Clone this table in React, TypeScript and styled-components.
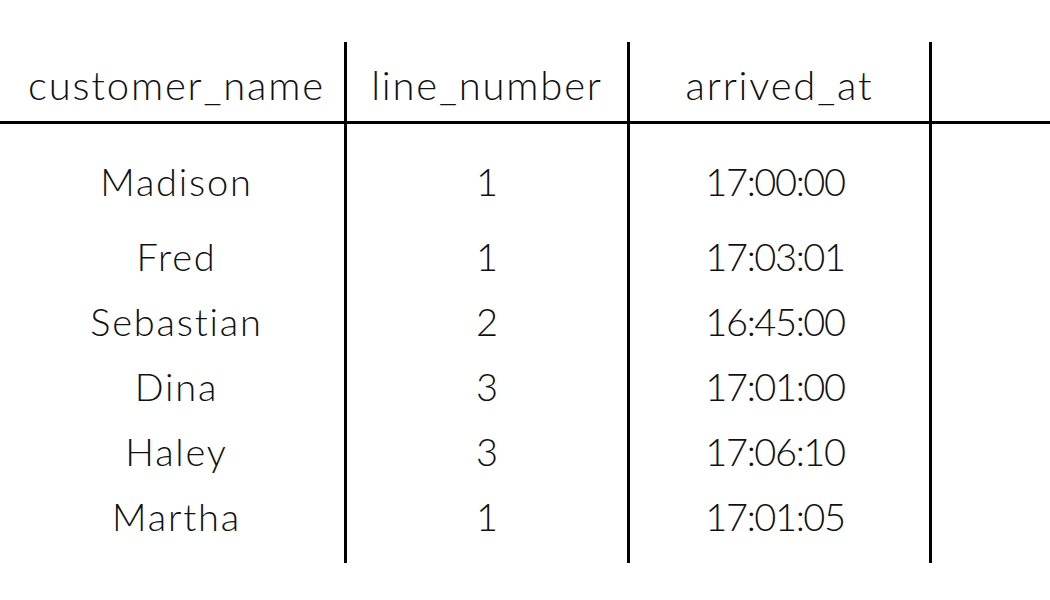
import React, { FC } from 'react';
import styled, { createGlobalStyle } from 'styled-components';

const GlobalStyle = createGlobalStyle`
  html, body {
    margin: 0;
    padding: 0;
    background: #ffffff;
  }
  body {
    font-family: Lato, 'Open Sans', sans-serif;
    font-weight: 300;
    color: #111111;
  }
`;

const Table = styled.div`
  display: grid;
  grid-template-columns: 347px 283px 302px 1fr;
  margin-top: 42px;
  height: 521px;
  width: 1050px;
`;

const Column = styled.div<{ $last?: boolean }>`
  display: flex;
  flex-direction: column;
  border-right: ${(p) => (p.$last ? 'none' : '3px solid #000')};
  text-align: center;
`;

const HeadCell = styled.div<{ $shift?: number }>`
  height: 71px;
  padding-top: 8px;
  padding-left: ${(p) => p.$shift || 0}px;
  line-height: 70px;
  font-size: 40px;
  letter-spacing: 1.8px;
  border-bottom: 3px solid #000;
  white-space: nowrap;
`;

// shift > 0 pushes the values right, shift < 0 pulls them left
const Body = styled.div<{ $shift?: number }>`
  display: flex;
  flex-direction: column;
  padding-top: 25px;
  padding-left: ${(p) => Math.max(p.$shift || 0, 0)}px;
  padding-right: ${(p) => Math.max(-(p.$shift || 0), 0)}px;
`;

const Cell = styled.div<{ $first?: boolean; $spacing: number }>`
  height: ${(p) => (p.$first ? 75 : 65)}px;
  line-height: 65px;
  font-size: 38px;
  letter-spacing: ${(p) => p.$spacing}px;
  white-space: nowrap;
`;

type ColumnDef = {
  title: string;
  values: string[];
  headShift?: number;
  bodyShift?: number;
  spacing: number;
};

const columns: ColumnDef[] = [
  {
    title: 'customer_name',
    values: ['Madison', 'Fred', 'Sebastian', 'Dina', 'Haley', 'Martha'],
    headShift: 9,
    bodyShift: 9,
    spacing: 1.8,
  },
  {
    title: 'line_number',
    values: ['1', '1', '2', '3', '3', '1'],
    spacing: 0,
  },
  {
    title: 'arrived_at',
    values: ['17:00:00', '17:03:01', '16:45:00', '17:01:00', '17:06:10', '17:01:05'],
    bodyShift: -9,
    spacing: -1.4,
  },
];

const App: FC = () => {
  return (
    <>
      <GlobalStyle />
      <Table>
        {columns.map((col) => (
          <Column key={col.title}>
            <HeadCell $shift={col.headShift}>{col.title}</HeadCell>
            <Body $shift={col.bodyShift}>
              {col.values.map((v, i) => (
                <Cell key={i} $first={i === 0} $spacing={col.spacing}>
                  {v}
                </Cell>
              ))}
            </Body>
          </Column>
        ))}
        <Column $last>
          <HeadCell />
        </Column>
      </Table>
    </>
  );
};

export default App;
